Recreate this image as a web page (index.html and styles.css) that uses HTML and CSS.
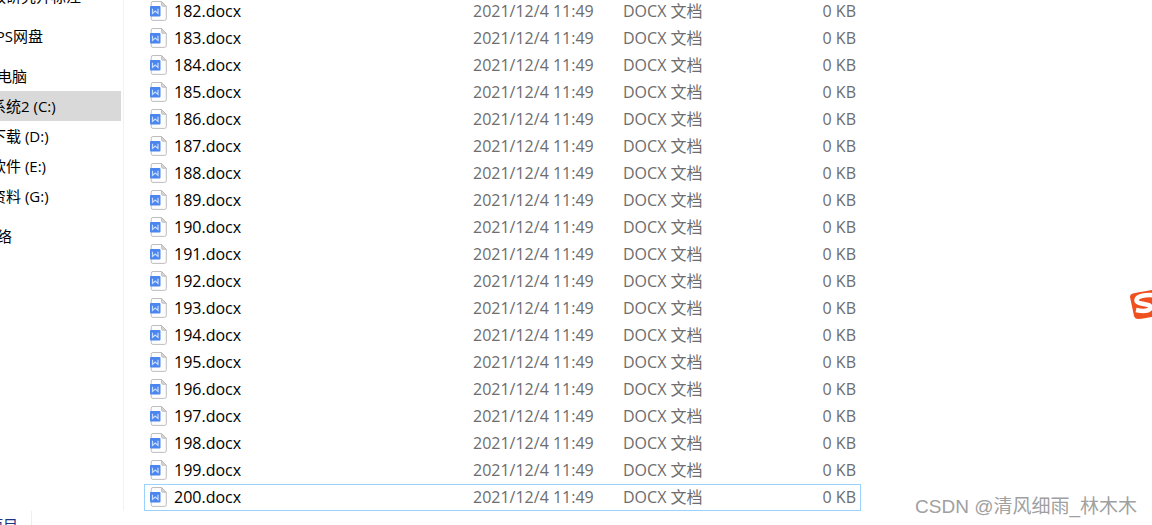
FILE: index.html
```html
<!DOCTYPE html>
<html lang="zh-CN">
<head>
    <meta charset="UTF-8">
    <meta name="viewport" content="width=device-width, initial-scale=1.0">
    <title>系统2 (C:)</title>
    <link rel="stylesheet" href="styles.css">
</head>
<body>
    <svg class="sprite" aria-hidden="true">
        <symbol id="docx" viewBox="0 0 18 20">
            <path d="M3 .5H11.500L16.300 5.300V17.600a1.800 1.800 0 0 1-1.800 1.800H3A1.800 1.800 0 0 1 1.200 17.600V2.300A1.800 1.800 0 0 1 3 .5Z" fill="#fdfdfd" stroke="#bdbdbd"/>
            <path d="M11.500 .5V3.800a1.500 1.500 0 0 0 1.500 1.500H16.300Z" fill="#d6d6d6" stroke="#b5b5b5" stroke-width=".8"/>
            <rect y="5" width="10.500" height="10.500" rx="1" fill="#4a86ee"/>
            <path d="M2.500 7.700V12.500L5.200 10L8 12.500V7.700" fill="none" stroke="#c8dcff" stroke-width="1.200"/>
        </symbol>
    </svg>

    <div class="explorer">
        <nav class="sidebar">
            <ul class="tree">
                <li class="group"><a class="item drive" href="#">教研究开标注</a></li>
                <li class="group"><a class="item" href="#">WPS网盘</a></li>
                <li class="group">
                    <a class="item" href="#">此电脑</a>
                    <a class="item drive active" href="#">系统2 (C:)</a>
                    <a class="item drive" href="#">下载 (D:)</a>
                    <a class="item drive" href="#">软件 (E:)</a>
                    <a class="item drive" href="#">资料 (G:)</a>
                </li>
                <li class="group"><a class="item" href="#">网络</a></li>
            </ul>
        </nav>
        <main class="content">
            <table class="files">
                <tbody id="fileList"></tbody>
            </table>
        </main>
    </div>

    <footer class="status"><span class="count">个项目</span></footer>

    <svg class="ime" viewBox="0 0 32 32" aria-hidden="true">
        <path d="M3 5.500Q14 3 29 1L31 27Q18 30 8 31Q5 31 4 28L0 9Q0 6 3 5.500Z" fill="#f0501e"/>
        <path d="M27 7.500C15 6 7 8 6.500 12C6 17 21 15 20.500 19.500C20 23.500 13 23.500 6 22" fill="none" stroke="#fff" stroke-width="4.500"/>
    </svg>
    <div class="watermark">CSDN @清风细雨_林木木</div>

    <script>
        const fileList = document.getElementById('fileList');
        const last = 200;

        for (let i = 182; i <= last; i++) {
            fileList.innerHTML += `
                <tr class="file${i === last ? ' focused' : ''}">
                    <td class="name"><svg class="icon"><use href="#docx"/></svg>${i}.docx</td>
                    <td class="date">2021/12/4 11:49</td>
                    <td class="type">DOCX 文档</td>
                    <td class="size">0 KB</td>
                </tr>`;
        }
    </script>
</body>
</html>
```

FILE: styles.css
```css
body {
    margin: 0;
    height: 100vh;
    overflow: hidden;
    background-color: #fff;
    color: #000;
    font-family: "Open Sans", "Noto Sans CJK SC", sans-serif;
    font-size: 16px;
}

.sprite {
    display: none;
}

.explorer {
    display: flex;
    margin-top: -19px;
}

/* Sidebar */
.sidebar {
    width: 121px;
    padding-right: 2px;
    border-right: 1px solid #f2f2f2;
    overflow: hidden;
    flex-shrink: 0;
}

.tree {
    list-style: none;
    margin: 0 0 0 -18px;
    padding: 0;
    font-size: 15px;
}

.group {
    margin-bottom: 10px;
}

.item {
    display: block;
    height: 30px;
    line-height: 30px;
    color: #000;
    text-decoration: none;
    white-space: nowrap;
}

.drive {
    padding-left: 9px;
}

.active {
    background-color: #d9d9d9;
}

/* File list */
.content {
    flex: 1;
    padding: 17px 0 0 20px;
}

.files {
    table-layout: fixed;
    width: 717px;
    border-collapse: collapse;
}

.file td {
    height: 27px;
    padding: 0;
    line-height: 27px;
    color: #6d6d6d;
    white-space: nowrap;
}

.file .name {
    width: 329px;
    color: #000;
}

.file .date {
    width: 150px;
}

.file .type {
    width: 150px;
}

.file .size {
    padding-right: 5px;
    text-align: right;
}

.focused {
    outline: 1px solid #99d1ff;
    outline-offset: -1px;
}

.icon {
    width: 18px;
    height: 20px;
    margin: 0 6px 3px 6px;
    vertical-align: middle;
}

/* Status bar */
.status {
    display: flex;
    height: 28px;
    line-height: 28px;
    margin-left: -27px;
    color: #1e3287;
    font-size: 15px;
}

.count {
    padding-right: 13px;
    border-right: 1px solid #eee;
}

/* Floating over the window */
.ime {
    position: absolute;
    top: 288px;
    right: -10px;
    width: 32px;
    height: 32px;
}

.watermark {
    position: absolute;
    right: 15px;
    bottom: 4px;
    color: #a0a0a0;
    font-family: "Liberation Sans", "Noto Sans CJK SC", sans-serif;
    font-size: 19px;
    line-height: 28px;
}
```
